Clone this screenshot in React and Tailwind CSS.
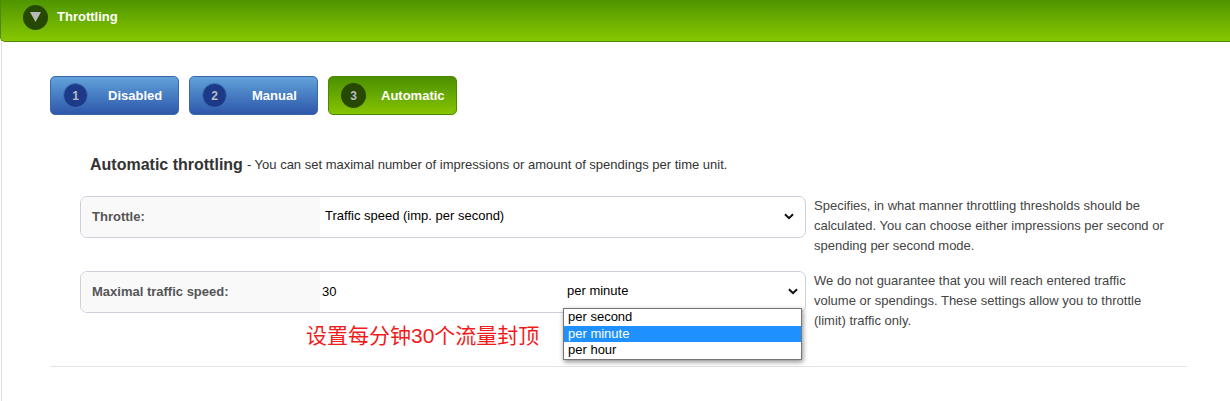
const font = { fontFamily: '"Liberation Sans", Arial, sans-serif' };

function Chevron() {
  return (
    <svg width="10" height="7" viewBox="0 0 10 7" className="block">
      <path d="M1 1.2 L5 5.2 L9 1.2" fill="none" stroke="#111" strokeWidth="2" />
    </svg>
  );
}

function Step({ n, label, active, labelClass }) {
  return (
    <div
      className={`flex items-center w-[129px] h-[39px] rounded-[5px] border pl-[12px] ${
        active
          ? 'border-[#4b8a00] bg-gradient-to-b from-[#4b9000] to-[#86c400]'
          : 'border-[#3a68ad] bg-gradient-to-b from-[#62a2d9] to-[#2f57ab]'
      }`}
    >
      <span
        className={`flex items-center justify-center w-[25px] h-[25px] rounded-full text-[12px] font-bold text-[#b9bcc4] ${
          active ? 'bg-[#264800]' : 'bg-[#1c3a88] border border-[#3f74b8]'
        }`}
      >
        {n}
      </span>
      <span className={`text-[13px] font-bold text-white ${labelClass}`}>{label}</span>
    </div>
  );
}

function Row({ label, children, help }) {
  return (
    <div className="flex items-start h-[42px]">
      <div className="flex w-[726px] h-[42px] border border-[#ccd0dd] rounded-[7px] overflow-hidden bg-white shrink-0">
        <div className="w-[239px] bg-[#f9f9fa] pl-[11px] flex items-center text-[13px] font-bold text-[#555]">
          {label}
        </div>
        <div className="flex-1 flex items-center text-[13px] text-black">{children}</div>
      </div>
      <p className="ml-[8px] w-[354px] text-[13px] leading-[20px] text-[#444]">{help}</p>
    </div>
  );
}

export default function App() {
  return (
    <div className="relative w-[1230px] h-[401px] bg-white overflow-hidden" style={font}>
      <div className="flex items-center h-[42px] pl-[22px] rounded-bl-[5px] border-b border-l border-[#4e8a00] bg-gradient-to-b from-[#4e9500] to-[#88c800]">
        <span className="flex items-center justify-center w-[25px] h-[25px] -mt-[7px] rounded-full bg-[#264800]">
          <svg width="11" height="10" viewBox="0 0 11 10">
            <path d="M0 0 H11 L5.5 10 Z" fill="#b8bab8" />
          </svg>
        </span>
        <span className="ml-[9px] -mt-[7px] text-[13px] font-bold text-white">Throttling</span>
      </div>

      <div className="h-[359px] border-l border-[#e0e0e0] ml-[1px] pl-[48px] pt-[34px]">
        <div className="flex gap-[10px]">
          <Step n="1" label="Disabled" labelClass="ml-[20px]" />
          <Step n="2" label="Manual" labelClass="ml-[25px]" />
          <Step n="3" label="Automatic" active labelClass="ml-[15px]" />
        </div>

        <div className="mt-[40px] ml-[40px] h-[20px] flex items-center text-[#333]">
          <span className="text-[16px] font-bold">Automatic throttling</span>
          <span className="ml-[4px] text-[13px]">- You can set maximal number of impressions or amount of spendings per time unit.</span>
        </div>

        <div className="mt-[21px] ml-[30px] flex flex-col gap-[33px]">
          <Row
            label="Throttle:"
            help="Specifies, in what manner throttling thresholds should be calculated. You can choose either impressions per second or spending per second mode."
          >
            <div className="flex items-center justify-between w-full pl-[5px] pr-[11px] -mt-[2px]">
              <span>Traffic speed (imp. per second)</span>
              <Chevron />
            </div>
          </Row>
          <Row
            label="Maximal traffic speed:"
            help="We do not guarantee that you will reach entered traffic volume or spendings. These settings allow you to throttle (limit) traffic only."
          >
            <div className="flex items-center w-full pl-[2px] pr-[7px]">
              <span className="w-[245px]">30</span>
              <div className="flex-1 flex items-center justify-between -mt-[2px]">
                <span>per minute</span>
                <Chevron />
              </div>
            </div>
          </Row>
        </div>

        <div className="mt-[53px] w-[1137px] border-t border-[#e3e3e3]" />
      </div>

      <div className="absolute left-[306px] top-[322px] text-[21px] leading-[28px] text-[#f01c1c]" style={{ fontFamily: '"Liberation Sans", "Noto Sans CJK SC", sans-serif' }}>
        设置每分钟30个流量封顶
      </div>

      <div className="absolute left-[563px] top-[308px] w-[239px] h-[52px] border border-[#767676] bg-white text-[13px] leading-[16px] text-black shadow-[1px_2px_5px_rgba(0,0,0,0.45)]">
        <div className="pl-[4px] h-[17px]">per second</div>
        <div className="pl-[4px] h-[16px] bg-[#1e90ff] text-white">per minute</div>
        <div className="pl-[4px] h-[17px]">per hour</div>
      </div>
    </div>
  );
}
